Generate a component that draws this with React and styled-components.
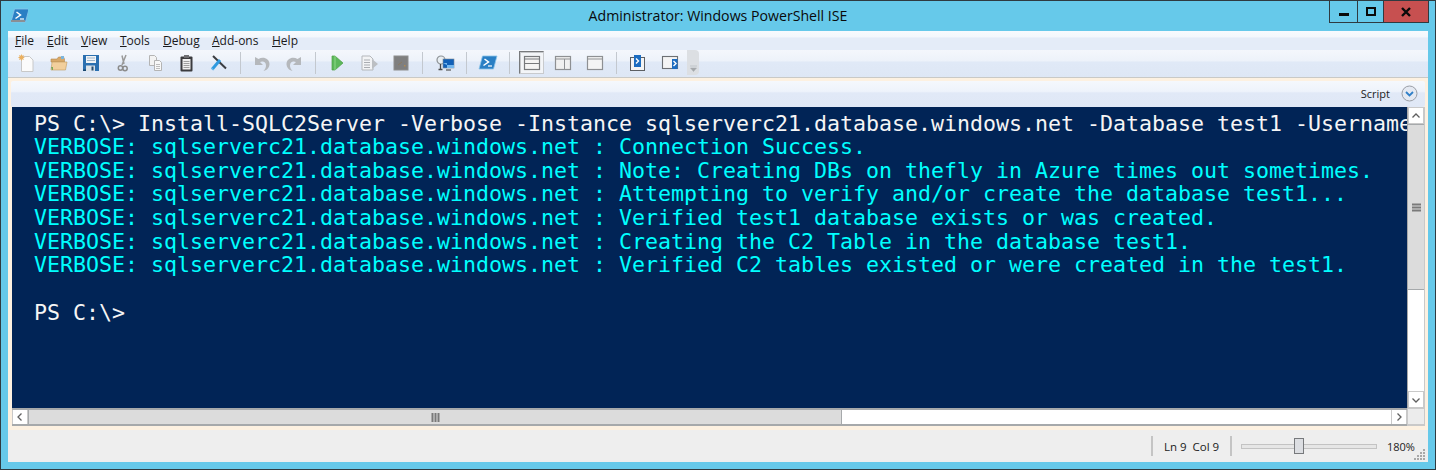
import React from 'react'
import styled, { createGlobalStyle } from 'styled-components'

const Global = createGlobalStyle`
  html, body { margin: 0; padding: 0; background: #66c9ea; }
  #root { width: 1436px; height: 470px; overflow: hidden; }
`

const Frame = styled.div`
  box-sizing: border-box;
  width: 1436px;
  height: 470px;
  display: flex;
  flex-direction: column;
  background: #66c9ea;
  border: 1px solid #2f3a40;
  font-family: 'Open Sans', 'Noto Sans', sans-serif;
  color: #111;
`

const TitleBar = styled.div`
  height: 30px;
  flex: none;
  display: flex;
  align-items: flex-start;
  padding: 0 6px 0 9px;
`

const AppIcon = styled.svg`
  width: 18px;
  height: 18px;
  margin-top: 5px;
`

const Title = styled.div`
  flex: 1;
  text-align: center;
  font-size: 14.15px;
  line-height: 30px;
  padding-left: 79px;
  color: #0a0a0a;
`

const WindowButtons = styled.div`
  display: flex;
  height: 21px;
  border: 1px solid #2f3a40;
  border-top: 0;
`

const WindowButton = styled.div`
  width: ${p => p.$w}px;
  display: flex;
  align-items: center;
  justify-content: center;
  background: ${p => p.$close ? '#c75050' : 'transparent'};
  border-left: ${p => p.$first ? '0' : '1px solid #2f3a40'};
`

const Client = styled.div`
  flex: 1;
  margin: 0 7px 7px;
  display: flex;
  flex-direction: column;
  min-height: 0;
`

const Menu = styled.div`
  height: 19px;
  flex: none;
  display: flex;
  padding-left: 7px;
  font-size: 12px;
  line-height: 20px;
  background: linear-gradient(#f7fafe 0, #f3f7fc 32%, #e4ecf8 36%, #e4ecf8 100%);
`

const MenuItem = styled.span`
  width: ${p => p.$w}px;
  color: #1a1a1a;
`

const Toolbar = styled.div`
  box-sizing: border-box;
  height: 28px;
  flex: none;
  display: flex;
  align-items: center;
  padding: 0 0 2px 3px;
  background: linear-gradient(#f4f7fc 0, #edf2fa 40%, #e0e9f7 45%, #dee7f5 100%);
  border-bottom: 1px solid #c9c9c6;
`

const ToolCell = styled.div`
  box-sizing: border-box;
  width: ${p => p.$w || 32}px;
  height: 23px;
  flex: none;
  display: flex;
  align-items: center;
  justify-content: center;
  ${p => p.$pressed && `
    margin: 0 3px 0 4px;
    border: 1px solid #77797c;
    border-right-color: #c8cacd;
    border-bottom-color: #c8cacd;
    box-shadow: inset 1px 1px 0 #c6c8cb;
    background: #f3f5f8;
  `}
`

const ToolSep = styled.div`
  width: 1px;
  height: 22px;
  flex: none;
  margin: 0 5px;
  background: #c3c8cf;
`

const Overflow = styled.div`
  box-sizing: border-box;
  width: 12px;
  height: 25px;
  margin-left: 1px;
  flex: none;
  border-radius: 0 4px 4px 0;
  background: #dcdfe3;
  display: flex;
  flex-direction: column;
  align-items: center;
  justify-content: flex-end;
  padding-bottom: 3px;
`

const OverflowMark = styled.svg`
  width: 7px;
  height: 7px;
`

const Workspace = styled.div`
  flex: 1;
  min-height: 0;
  display: flex;
  flex-direction: column;
  background: #fdf1e1;
  padding: 3px 0 4px 4px;
`

const ScriptHeader = styled.div`
  box-sizing: border-box;
  height: 26px;
  flex: none;
  margin-left: -1px;
  margin-right: 3px;
  display: flex;
  align-items: center;
  justify-content: flex-end;
  gap: 11px;
  padding: 0 7px 2px 0;
  font-size: 11px;
  color: #222;
  border-radius: 2px;
  background: linear-gradient(#f5f8fd 0, #eef3fb 40%, #e1e9f7 46%, #e0e8f6 100%);
`

const Collapse = styled.svg`
  width: 17px;
  height: 17px;
`

const PaneGrid = styled.div`
  flex: 1;
  min-height: 0;
  display: grid;
  grid-template-columns: minmax(0, 1fr) 17px;
  grid-template-rows: minmax(0, 1fr) 18px;
  margin-right: 3px;
  border-right: 1px solid #c9c9c9;
`

const Console = styled.pre`
  margin: 0;
  padding: 4.5px 0 0 22px;
  overflow: hidden;
  background: #012456;
  color: #f5f5f5;
  font-family: 'DejaVu Sans Mono', 'Liberation Mono', monospace;
  font-size: 21.6px;
  line-height: 23.63px;
  white-space: pre;
`

const Line = styled.div`
  height: 23.63px;
  color: ${p => p.$verbose ? '#00ffff' : '#f5f5f5'};
`

const VScroll = styled.div`
  display: flex;
  flex-direction: column;
  background: #fff;
  border-left: 1px solid #a8a8a8;
`

const HScroll = styled.div`
  display: flex;
  background: #fff;
  border-top: 2px solid #a6a9ab;
  border-bottom: 2px solid #a6a9ab;
`

const ScrollButton = styled.div`
  box-sizing: border-box;
  flex: none;
  width: ${p => p.$horizontal ? '16px' : 'auto'};
  height: ${p => p.$horizontal ? 'auto' : '17px'};
  background: #fff;
  display: flex;
  align-items: center;
  justify-content: center;
  border: 1px solid #c9c9c9;
  ${p => p.$horizontal && 'border-top: 0; border-bottom: 0;'}
`

const Thumb = styled.div`
  flex: none;
  display: flex;
  align-items: center;
  justify-content: center;
  background: #dcdcdc;
  width: ${p => p.$w ? `${p.$w}px` : 'auto'};
  height: ${p => p.$h ? `${p.$h}px` : 'auto'};
  ${p => p.$w && 'border-left: 1px solid #a6a9ab; border-right: 1px solid #a6a9ab;'}
  ${p => p.$h && 'border-top: 1px solid #a6a9ab; border-bottom: 1px solid #a6a9ab;'}
`

const Track = styled.div`
  flex: 1;
`

const Corner = styled.div`
  background: #ececec;
  border-left: 1px solid #c9c9c9;
  border-top: 1px solid #c9c9c9;
  border-bottom: 2px solid #c9c9c9;
`

const StatusBar = styled.div`
  height: 32px;
  flex: none;
  display: flex;
  align-items: center;
  justify-content: flex-end;
  position: relative;
  background: #eeeeee;
  font-size: 11px;
  color: #222;
`

const StatusSep = styled.div`
  width: 2px;
  height: 20px;
  background: #c4c4c4;
`

const Position = styled.div`
  width: 77px;
  text-align: center;
  font-size: 11.5px;
`

const Slider = styled.div`
  position: relative;
  width: 134px;
  height: 3px;
  margin-left: 9px;
  background: #e6e6e6;
  border: 1px solid #c3c3c3;
`

const SliderThumb = styled.div`
  position: absolute;
  left: 52px;
  top: -7px;
  width: 8px;
  height: 14px;
  background: #dcdee2;
  border: 1px solid #77797c;
`

const Zoom = styled.div`
  width: 41px;
  margin-left: 10px;
`

const Grip = styled.svg`
  position: absolute;
  right: 2px;
  bottom: 1px;
  width: 12px;
  height: 12px;
`

const Chevron = ({ d }) => (
  <svg width="10" height="10" viewBox="0 0 10 10"><path d={d} fill="none" stroke="#5f5f5f" strokeWidth="1.3" /></svg>
)

const Bars = ({ vertical }) => (
  <svg width="9" height="9" viewBox="0 0 9 9">
    {[0, 3, 6].map(o => vertical
      ? <rect key={o} x="0" y={o + 0.5} width="9" height="2" fill="#7a7a7a" />
      : <rect key={o} x={o + 0.5} y="0" width="2" height="9" fill="#7a7a7a" />)}
  </svg>
)

const Ico = ({ children }) => (
  <svg width="20" height="20" viewBox="0 0 20 20">{children}</svg>
)

const PsGlyph = () => (
  <g>
    <path d="M4.5 3H19L15.5 16H1Z" fill="#2a7fc4" stroke="#8cc4ea" strokeWidth="0.8" />
    <path d="M6.5 6l4 3-5 3.5" fill="none" stroke="#fff" strokeWidth="1.5" />
    <path d="M10 13h4" stroke="#fff" strokeWidth="1.2" />
  </g>
)

const icons = {
  new: <Ico><path d="M4.500 3.500h8l3.500 3.500v11.500h-11.500z" fill="#fbfbfb" stroke="#c8c8c8" /><path d="M4.500 1l.7 1.700 1.700-.7-.8 1.800 1.800.7-1.800.7.800 1.800-1.800-.8-.7 1.800-.7-1.800-1.800.8.800-1.800-1.800-.7 1.800-.7-.8-1.800 1.800.7z" fill="#eab060" /></Ico>,
  open: <Ico><path d="M2 6h6l1.500-2h5l1 2v3H2z" fill="#d8a868" stroke="#b68a50" strokeWidth=".6" /><path d="M3 9h15l-1.500 8H2z" fill="#f2cf9c" stroke="#c09a60" strokeWidth=".6" /><path d="M12 3h3v3h-3z" fill="#7cb5dc" /><path d="M2 14l1 3h1v-3z" fill="#79a85a" /></Ico>,
  save: <Ico><rect x="2" y="2" width="16" height="16" fill="#2a6fb0" /><rect x="5" y="3" width="10" height="7" fill="#f0f3f6" /><path d="M6 5h8M6 7.500h8" stroke="#9db4c9" /><rect x="5" y="12.500" width="9" height="5.500" fill="#dbe2e8" /><rect x="10.500" y="13.500" width="2" height="4" fill="#234a6e" /><rect x="2" y="16.500" width="3" height="1.500" fill="#17466e" /></Ico>,
  cut: <Ico><path d="M13 2l-4 10M9 2.500l2 8.500" stroke="#9a9a9a" strokeWidth="1.500" fill="none" /><circle cx="7.500" cy="15" r="2.200" fill="none" stroke="#8c8c8c" strokeWidth="1.500" /><circle cx="12" cy="15.500" r="2.200" fill="none" stroke="#8c8c8c" strokeWidth="1.500" /></Ico>,
  copy: <Ico><path d="M4.500 2.500h5l2 2v8h-7z" fill="#f3f3f3" stroke="#b4b4b4" /><path d="M9.500 7.500h5l2 2v8h-7z" fill="#f8f8f8" stroke="#b4b4b4" /><path d="M11 11.500h4M11 13.500h4M11 15.500h4" stroke="#bdbdbd" /></Ico>,
  paste: <Ico><rect x="3.500" y="3.500" width="12" height="15" rx="1" fill="#3b3b3f" /><rect x="5.500" y="6" width="8" height="10.500" fill="#f0f0f0" /><path d="M6.500 8.500h6M6.500 10.500h6M6.500 12.500h6M6.500 14.500h6" stroke="#8a8a8a" strokeWidth=".8" /><rect x="7" y="2" width="5" height="3" fill="#6e6e72" /></Ico>,
  clear: <Ico><path d="M4 3l13 12.500" stroke="#3a3d42" strokeWidth="2" /><path d="M3 16.500l8-9.500" stroke="#2f9ae0" strokeWidth="3" /><path d="M2.500 15l2 2" stroke="#8ccdf5" strokeWidth="1" /></Ico>,
  undo: <Ico><path d="M3 4v8h8l-3-3c3-1.500 6 0 6 3.500 0 2-1 4-2.500 5.500 4-1 6-4 6-7 0-5.500-6.500-8-11-5z" fill="#b5b8bc" /></Ico>,
  redo: <Ico><path d="M17 4v8H9l3-3c-3-1.500-6 0-6 3.500 0 2 1 4 2.500 5.500-4-1-6-4-6-7 0-5.500 6.500-8 11-5z" fill="#b5b8bc" /></Ico>,
  run: <Ico><path d="M5 3v14h3l8-7-8-7z" fill="#5cb85c" stroke="#4a9d44" strokeWidth=".7" /><path d="M8 3v14" stroke="#8dd888" /></Ico>,
  runSel: <Ico><path d="M3 3h8l3 3v11H3z" fill="#f2f3f5" stroke="#b4b7bb" /><path d="M5 7h6M5 9.500h6M5 12h6M5 14.500h6" stroke="#a9acb1" /><path d="M13 6l6 5-6 5z" fill="#bcbfc3" /></Ico>,
  stop: <Ico><rect x="3" y="3" width="14" height="14" fill="#7f7f7f" stroke="#8e8e8e" /><path d="M7 12l4-3" stroke="#8a7a62" /><rect x="13" y="12" width="1.500" height="1.500" fill="#b08a52" /></Ico>,
  remote: <Ico><circle cx="6" cy="7" r="4" fill="#e8eef3" stroke="#8d9296" strokeWidth="1.200" /><path d="M5.500 11v5M3.500 16.500h4" stroke="#4a4a4a" strokeWidth="1.300" /><rect x="8" y="6" width="11" height="9" fill="#1160b8" stroke="#7d8a96" strokeWidth=".6" /><path d="M8 10h4v5h7v-3h-7" fill="#75b7ee" /><path d="M11 17h5" stroke="#555" strokeWidth="1.200" /></Ico>,
  ps: <Ico><PsGlyph /></Ico>,
  layoutTop: <Ico><rect x="2.500" y="3.500" width="15" height="13" fill="#f4f4f4" stroke="#77797c" strokeWidth="1.200" /><path d="M2.500 6h15M2.500 10.500h15" stroke="#77797c" /></Ico>,
  layoutRight: <Ico><rect x="2.500" y="3.500" width="15" height="13" fill="#f0f0f0" stroke="#8e9093" strokeWidth="1.200" /><path d="M2.500 6h15M11.500 6v10.500" stroke="#8e9093" /></Ico>,
  layoutMax: <Ico><rect x="2.500" y="3.500" width="15" height="13" fill="#f4f4f4" stroke="#8e9093" strokeWidth="1.200" /><path d="M2.500 6h15" stroke="#8e9093" /></Ico>,
  paneLeft: <Ico><rect x="2.500" y="4.500" width="14" height="13" fill="#f4f4f4" stroke="#5c5f63" /><rect x="6" y="2" width="7" height="12" fill="#1c6cc0" /><path d="M8 5.500l2.500 2.500-2.500 2.500" fill="none" stroke="#fff" strokeWidth="1.400" /></Ico>,
  paneRight: <Ico><rect x="2.500" y="3.500" width="15" height="12" fill="#f4f4f4" stroke="#6d7074" strokeWidth="1.100" /><rect x="12" y="6" width="5.500" height="10" fill="#1c6cc0" /><path d="M13.500 8l2.500 2.500-2.500 2.500" fill="none" stroke="#fff" strokeWidth="1.400" /></Ico>,
}

const menus = [
  ['F', 'ile', 32], ['E', 'dit', 34], ['V', 'iew', 39], ['T', 'ools', 43],
  ['D', 'ebug', 49], ['A', 'dd-ons', 60], ['H', 'elp', 34],
]

const tools = [
  ['new', 'open', 'save', 'cut', 'copy', 'paste', 'clear'],
  ['undo', 'redo'],
  ['run', 'runSel', 'stop'],
  ['remote'],
  ['ps'],
  ['layoutTop', 'layoutRight', 'layoutMax'],
  ['paneLeft', 'paneRight'],
]

const cellWidths = { remote: 33, layoutTop: 25 }

const host = 'VERBOSE: sqlserverc21.database.windows.net : '

const lines = [
  'Connection Success.',
  'Note: Creating DBs on thefly in Azure times out sometimes.',
  'Attempting to verify and/or create the database test1...',
  'Verified test1 database exists or was created.',
  'Creating the C2 Table in the database test1.',
  'Verified C2 tables existed or were created in the test1.',
]

const App = () => (
  <>
    <Global />
    <Frame>
      <TitleBar>
        <AppIcon viewBox="0 0 18 18">
          <PsGlyph />
          <rect x="1" y="14" width="14" height="2" fill="#8a8f94" />
        </AppIcon>
        <Title>Administrator: Windows PowerShell ISE</Title>
        <WindowButtons>
          <WindowButton $w={27} $first>
            <svg width="10" height="10" viewBox="0 0 10 10"><rect y="6" width="10" height="3" fill="#0a0a0a" /></svg>
          </WindowButton>
          <WindowButton $w={25}>
            <svg width="10" height="10" viewBox="0 0 10 10"><rect x="1" y="1" width="8" height="7" fill="none" stroke="#0a0a0a" strokeWidth="2" /></svg>
          </WindowButton>
          <WindowButton $w={44} $close>
            <svg width="10" height="10" viewBox="0 0 10 10"><path d="M1 1l8 8M9 1l-8 8" stroke="#0a0a0a" strokeWidth="2.400" /></svg>
          </WindowButton>
        </WindowButtons>
      </TitleBar>
      <Client>
        <Menu>
          {menus.map(([key, rest, w]) => (
            <MenuItem key={key} $w={w}><u>{key}</u>{rest}</MenuItem>
          ))}
        </Menu>
        <Toolbar>
          {tools.map((group, i) => (
            <React.Fragment key={group[0]}>
              {i > 0 && <ToolSep />}
              {group.map(name => (
                <ToolCell key={name} $pressed={name === 'layoutTop'} $w={cellWidths[name]}>
                  {icons[name]}
                </ToolCell>
              ))}
            </React.Fragment>
          ))}
          <Overflow>
            <OverflowMark viewBox="0 0 7 7">
              <path d="M0 1h7M0.500 3h6l-3 3.500z" fill="#a5a8ac" stroke="#a5a8ac" strokeWidth=".5" />
            </OverflowMark>
          </Overflow>
        </Toolbar>
        <Workspace>
          <ScriptHeader>
            Script
            <Collapse viewBox="0 0 17 17">
              <circle cx="8.500" cy="8.500" r="7.500" fill="#e4e9f2" stroke="#9a9ea6" />
              <path d="M5 7l3.500 3.500L12 7" fill="none" stroke="#2f7fc8" strokeWidth="1.800" />
            </Collapse>
          </ScriptHeader>
          <PaneGrid>
            <Console>
              <Line>{'PS C:\\> Install-SQLC2Server -Verbose -Instance sqlserverc21.database.windows.net -Database test1 -Username'}</Line>
              {lines.map(text => <Line key={text} $verbose>{host}{text}</Line>)}
              <Line> </Line>
              <Line>{'PS C:\\>'}</Line>
            </Console>
            <VScroll>
              <ScrollButton><Chevron d="M1.500 6.500L5 3l3.500 3.500" /></ScrollButton>
              <Thumb $h={164}><Bars vertical /></Thumb>
              <Track />
              <ScrollButton><Chevron d="M1.500 3.500L5 7l3.500-3.500" /></ScrollButton>
            </VScroll>
            <HScroll>
              <ScrollButton $horizontal><Chevron d="M6.500 1.500L3 5l3.500 3.500" /></ScrollButton>
              <Thumb $w={812}><Bars /></Thumb>
              <Track />
              <ScrollButton $horizontal><Chevron d="M3.500 1.500L7 5 3.500 8.500" /></ScrollButton>
            </HScroll>
            <Corner />
          </PaneGrid>
        </Workspace>
        <StatusBar>
          <StatusSep />
          <Position>Ln 9&nbsp; Col 9</Position>
          <StatusSep />
          <Slider><SliderThumb /></Slider>
          <Zoom>180%</Zoom>
          <Grip viewBox="0 0 12 12">
            {[[9, 0], [6, 3], [9, 3], [3, 6], [6, 6], [9, 6], [0, 9], [3, 9], [6, 9], [9, 9]].map(([x, y]) => (
              <rect key={`${x}-${y}`} x={x} y={y} width="2" height="2" fill="#a8a8a8" />
            ))}
          </Grip>
        </StatusBar>
      </Client>
    </Frame>
  </>
)

export default App
